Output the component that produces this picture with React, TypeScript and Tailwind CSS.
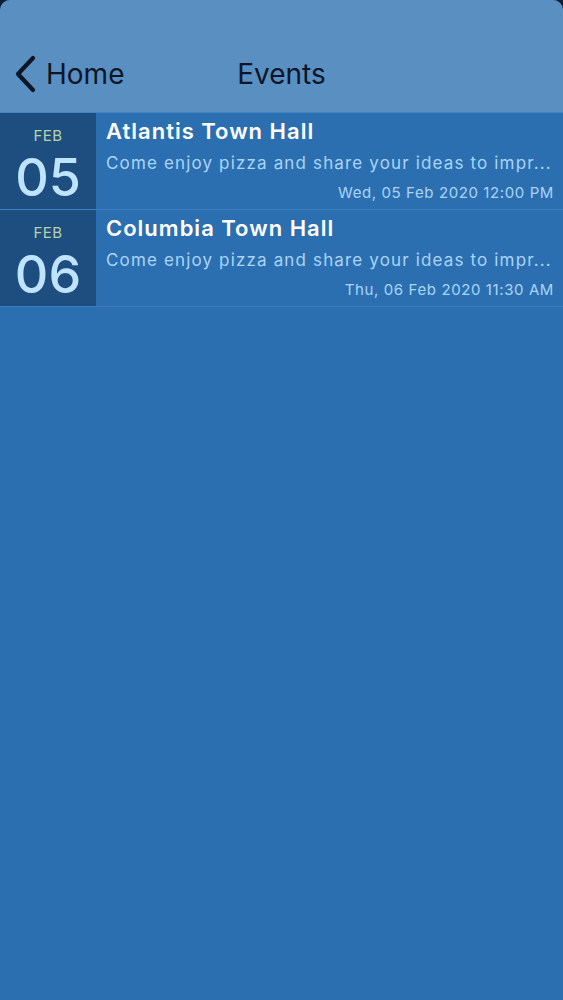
const events = [
  {
    month: "FEB",
    day: "05",
    title: "Atlantis Town Hall",
    body: "Come enjoy pizza and share your ideas to impr...",
    when: "Wed, 05 Feb 2020 12:00 PM",
  },
  {
    month: "FEB",
    day: "06",
    title: "Columbia Town Hall",
    body: "Come enjoy pizza and share your ideas to impr...",
    when: "Thu, 06 Feb 2020 11:30 AM",
  },
];

function EventRow({ e }: { e: (typeof events)[number] }) {
  return (
    <div className="flex h-[97px] border-b border-[#3b7fbe]">
      <div className="flex w-[96px] shrink-0 flex-col items-center bg-[#1e4d80] pt-[14px]">
        <span className="text-[15px] leading-[18px] tracking-[0.5px] text-[#b6d3a9]">{e.month}</span>
        <span className="mt-[9px] text-[52px] font-medium leading-[48px] text-[#bfe4ff]">{e.day}</span>
      </div>
      <div className="flex min-w-0 flex-1 flex-col pl-[10px] pr-[9px] pt-[4px]">
        <p className="whitespace-nowrap text-[22px] font-semibold leading-[28px] tracking-[1px] text-white">{e.title}</p>
        <p className="mt-[6px] whitespace-nowrap text-[17px] leading-[24px] tracking-[1.15px] text-[#a9d5f7]">{e.body}</p>
        <p className="mt-[8px] whitespace-nowrap text-right text-[15px] leading-[20px] tracking-[0.6px] text-[#a9d5f7]">{e.when}</p>
      </div>
    </div>
  );
}

export default function App() {
  return (
    <div className="h-[1000px] w-[563px] overflow-hidden bg-[#0f1e33] font-['Inter',sans-serif]">
      <div className="flex h-full flex-col overflow-hidden rounded-t-[10px] bg-[#2c6fb1]">
        {/* Nav bar */}
        <header className="relative flex h-[113px] items-end border-b border-[#3f86c3] bg-[#5a8fc2] pb-[19px]">
          <div className="flex items-center pl-[13px]">
            <svg width="24" height="38" viewBox="0 0 24 38" className="text-[#0c1626]">
              <path d="M20 3 L5 19 L20 35" fill="none" stroke="currentColor" strokeWidth="4.2" strokeLinecap="round" strokeLinejoin="round" />
            </svg>
            <span className="ml-[9px] text-[28px] leading-[38px] text-[#0c1626]">Home</span>
          </div>
          <h1 className="absolute bottom-[19px] left-0 right-0 text-center text-[28px] leading-[38px] text-[#0c1626]">Events</h1>
        </header>

        {events.map((e) => (
          <EventRow key={e.day} e={e} />
        ))}
      </div>
    </div>
  );
}
